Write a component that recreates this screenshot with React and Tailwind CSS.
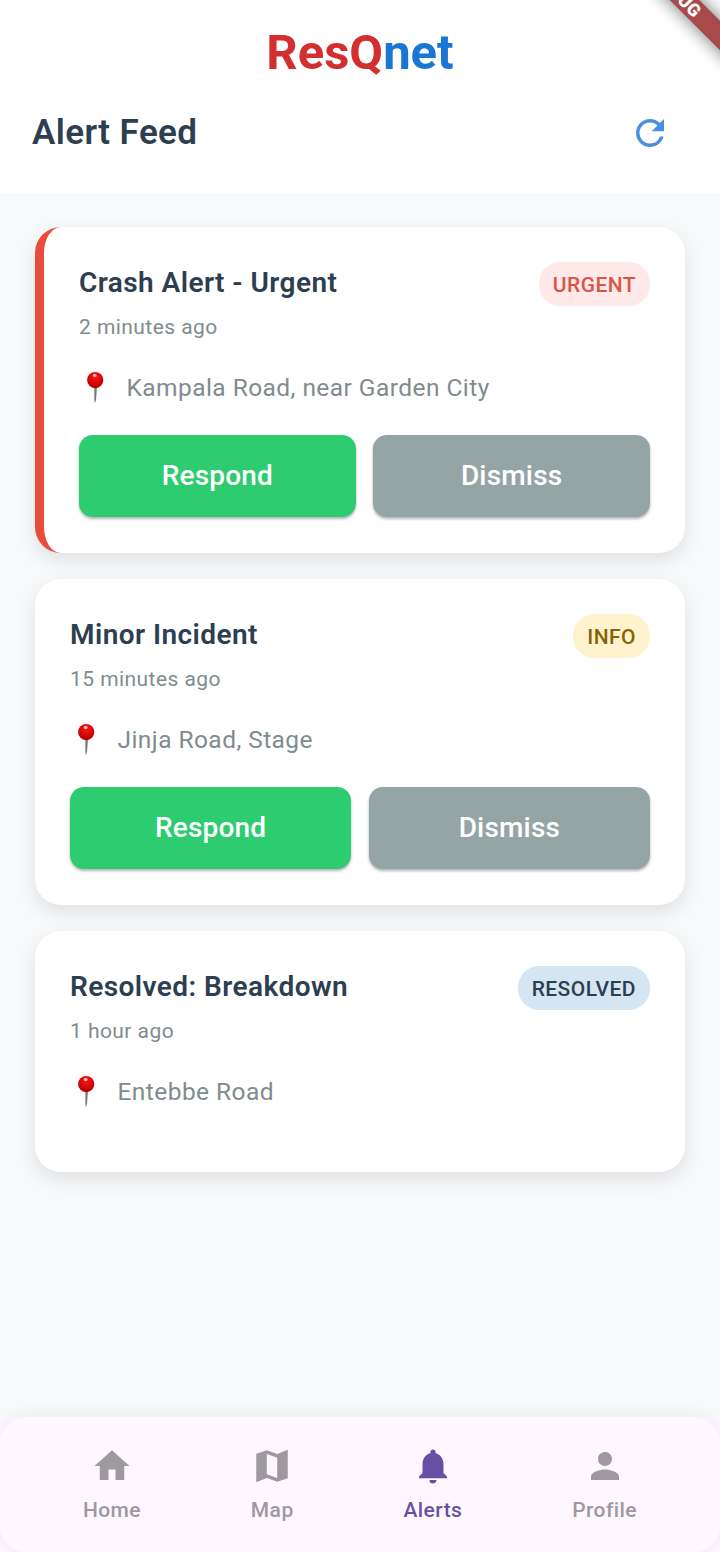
import { MdHome, MdNotifications, MdPerson, MdRefresh } from "react-icons/md";

function MapIcon({ size }) {
  return (
    <svg width={size} height={size} viewBox="0 0 24 24" fill="currentColor">
      <path d="M15 5.1 9 3 3 5.02v16.2l6-2.33 6 2.1 6-2.02V2.77L15 5.1zm0 13.79-6-2.11V5.11l6 2.11v11.67z" />
    </svg>
  );
}

function PinIcon() {
  return (
    <svg className="block" width="32" height="34" viewBox="0 0 32 34">
      <defs>
        <radialGradient id="pinHead" cx="0.5" cy="0.3" r="0.7">
          <stop offset="0" stopColor="#f51a1a" />
          <stop offset="0.5" stopColor="#df0808" />
          <stop offset="1" stopColor="#a90000" />
        </radialGradient>
        <linearGradient id="pinNeedle" x1="0" x2="1" y1="0" y2="0">
          <stop offset="0" stopColor="#d0d0d0" />
          <stop offset="0.5" stopColor="#888" />
          <stop offset="1" stopColor="#333" />
        </linearGradient>
      </defs>
      <path d="M14.7 15.5h3l-.7 13.6-1.2 3.2-.8-2.4z" fill="url(#pinNeedle)" />
      <circle cx="16.2" cy="9.1" r="8.1" fill="url(#pinHead)" />
      <ellipse cx="15.7" cy="4.4" rx="1.9" ry="1.6" fill="#ffb8b0" />
    </svg>
  );
}

const alerts = [
  {
    title: "Crash Alert - Urgent",
    time: "2 minutes ago",
    place: "Kampala Road, near Garden City",
    tag: "URGENT",
    tagStyle: "bg-[#ffe8e8] text-[#d8554a]",
    edge: "border-l-[9px] border-[#e74c3c]",
    actions: true,
  },
  {
    title: "Minor Incident",
    time: "15 minutes ago",
    place: "Jinja Road, Stage",
    tag: "INFO",
    tagStyle: "bg-[#fff3cd] text-[#856404]",
    edge: "",
    actions: true,
  },
  {
    title: "Resolved: Breakdown",
    time: "1 hour ago",
    place: "Entebbe Road",
    tag: "RESOLVED",
    tagStyle: "bg-[#d4e6f1] text-[#2c3e50]",
    edge: "",
    actions: false,
  },
];

function AlertCard({ alert }) {
  return (
    <article
      className={`rounded-[26px] bg-white px-[35px] pt-[35px] shadow-[0_7px_20px_rgba(0,0,0,0.1)] ${alert.edge} ${
        alert.actions ? "h-[326px]" : "h-[241px]"
      }`}
    >
      <div className="flex items-start justify-between">
        <div>
          <h2 className="text-[28px] leading-[42px] font-semibold tracking-[0.44px] text-[#2c3e50]">{alert.title}</h2>
          <p className="mt-[8px] text-[21px] leading-[30px] tracking-[0.44px] text-[#7f8c8d]">{alert.time}</p>
        </div>
        <span
          className={`flex h-[44px] items-center rounded-[21px] px-[14px] pt-[3px] text-[21px] font-medium tracking-[0.44px] ${alert.tagStyle}`}
        >
          {alert.tag}
        </span>
      </div>
      <div className="mt-[27px] flex items-center">
        <PinIcon />
        <span className="ml-[15.5px] text-[24.5px] leading-[38px] tracking-[0.44px] text-[#7f8c8d]">{alert.place}</span>
      </div>
      {alert.actions && (
        <div className="mt-[27.5px] flex gap-[17.5px] text-[28px] font-medium tracking-[0.18px] text-white">
          <button className="h-[82.5px] flex-1 rounded-[14px] bg-[#2ecc71] pt-[1px] shadow-[0_2px_3px_rgba(0,0,0,0.3)]">Respond</button>
          <button className="h-[82.5px] flex-1 rounded-[14px] bg-[#95a5a6] pt-[1px] shadow-[0_2px_3px_rgba(0,0,0,0.3)]">Dismiss</button>
        </div>
      )}
    </article>
  );
}

const tabs = [
  { label: "Home", Icon: MdHome },
  { label: "Map", Icon: MapIcon },
  { label: "Alerts", Icon: MdNotifications, active: true },
  { label: "Profile", Icon: MdPerson },
];

export default function App() {
  return (
    <div className="relative flex h-[1552px] w-[720px] flex-col overflow-hidden bg-[#f8f9fb] font-['Roboto',sans-serif]">
      <header className="h-[193px] bg-white pt-[24px]">
        <h1 className="text-center text-[49px] leading-[58px] font-bold">
          <span className="text-[#d32f2f]">ResQ</span>
          <span className="text-[#1976d2]">net</span>
        </h1>
        <div className="mt-[21px] flex items-center justify-between pr-[49px] pl-[32px]">
          <span className="text-[35px] leading-[60px] font-semibold tracking-[0.4px] text-[#2c3e50]">Alert Feed</span>
          <MdRefresh size={42} className="text-[#4a90e2]" />
        </div>
      </header>

      <main className="flex flex-1 flex-col gap-[26px] px-[35px] pt-[34px]">
        {alerts.map((alert) => (
          <AlertCard key={alert.title} alert={alert} />
        ))}
      </main>

      <div className="h-[135px] bg-[#fef7ff]">
        <nav className="flex h-[135px] justify-around rounded-[26px] bg-[#fef7ff] px-[28px] pt-[28px] shadow-[0_0_18px_rgba(0,0,0,0.07)]">
          {tabs.map(({ label, Icon, active }) => (
            <div key={label} className={`flex flex-col items-center ${active ? "text-[#6750a4]" : "text-[#9e999f]"}`}>
              <Icon size={42} />
              <span className="mt-[8px] text-[21px] leading-[30px] font-medium tracking-[0.44px]">{label}</span>
            </div>
          ))}
        </nav>
      </div>

      <div className="absolute top-[-17.5px] left-[567.5px] flex h-[21px] w-[220px] rotate-45 items-center justify-center bg-[#a94a4a] text-[17.8px] leading-none font-black text-white shadow-[0_0_18px_rgba(0,0,0,0.55)]">
        DEBUG
      </div>
    </div>
  );
}
